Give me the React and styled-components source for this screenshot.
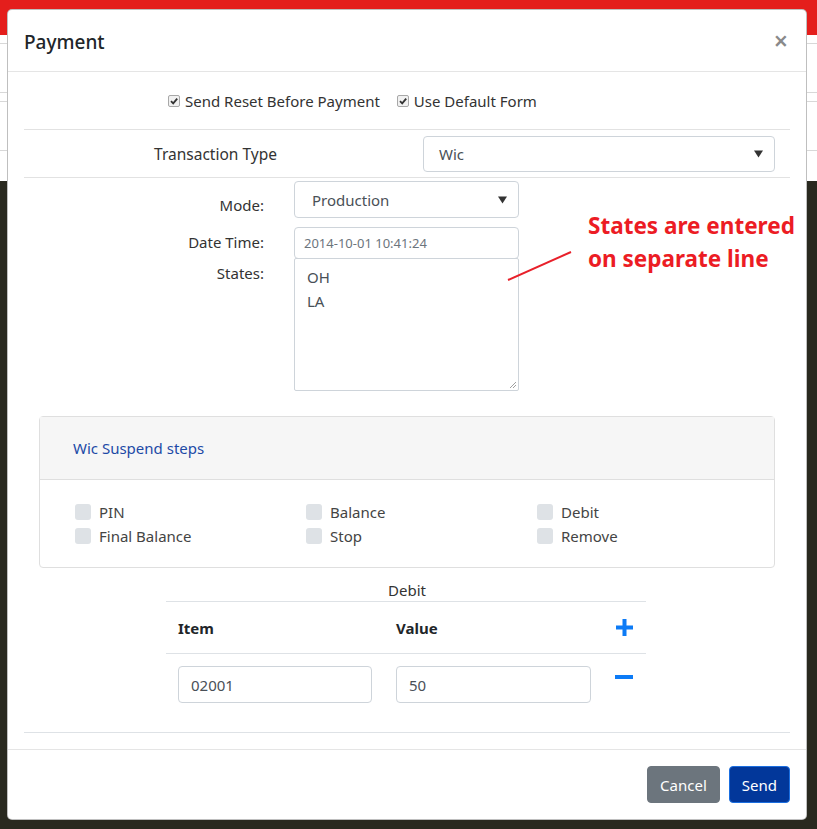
import React from "react";
import styled, { createGlobalStyle } from "styled-components";

const GlobalStyle = createGlobalStyle`
  html, body {
    margin: 0;
    padding: 0;
  }
  body {
    font-family: "Noto Sans", "Open Sans", sans-serif;
    background: #29291f;
  }
  * {
    box-sizing: border-box;
  }
`;

const stripRows = [9, 49, 9, 49, 30];
const steps = ["PIN", "Balance", "Debit", "Final Balance", "Stop", "Remove"];

function Caret() {
  return (
    <CaretIcon viewBox="0 0 10 8">
      <path d="M0 0 L10 0 L5 8 Z" fill="#333" />
    </CaretIcon>
  );
}

function TickBox({ label }) {
  return (
    <TickItem>
      <Tick>
        <svg width="10" height="10" viewBox="0 0 10 10">
          <path d="M2 5.2 L4.2 7.4 L8.2 2.6" stroke="#333" strokeWidth="1.8" fill="none" />
        </svg>
      </Tick>
      {label}
    </TickItem>
  );
}

export default function App() {
  return (
    <Page>
      <GlobalStyle />
      <RedBar />
      <Strip>
        {stripRows.map((h, i) => (
          <StripRow key={i} h={h} />
        ))}
      </Strip>

      <Modal>
        <Header>
          <Title>Payment</Title>
          <Close>×</Close>
        </Header>

        <Body>
          <CheckRow>
            <TickBox label="Send Reset Before Payment" />
            <TickBox label="Use Default Form" />
          </CheckRow>

          <TxRow>
            <TxLabel>Transaction Type</TxLabel>
            <TxCell>
              <Select h={36}>
                Wic
                <Caret />
              </Select>
            </TxCell>
          </TxRow>

          <FieldRow top={3}>
            <FieldLabel pad={14}>Mode:</FieldLabel>
            <Select h={37} w={225} pl={17}>
              Production
              <Caret />
            </Select>
          </FieldRow>
          <FieldRow top={9}>
            <FieldLabel pad={5}>Date Time:</FieldLabel>
            <Input small>2014-10-01 10:41:24</Input>
          </FieldRow>
          <FieldRow top={0}>
            <FieldLabel pad={4}>States:</FieldLabel>
            <TextArea>
              OH
              <br />
              LA
              <Grip viewBox="0 0 8 8">
                <path d="M1 7 L7 1 M4 7 L7 4" stroke="#888" strokeWidth="0.8" />
              </Grip>
            </TextArea>
          </FieldRow>

          <Panel>
            <PanelHead>Wic Suspend steps</PanelHead>
            <PanelBody>
              {steps.map((s) => (
                <StepItem key={s}>
                  <StepBox />
                  {s}
                </StepItem>
              ))}
            </PanelBody>
          </Panel>

          <Caption>Debit</Caption>
          <Table>
            <HeadRow>
              <HeadCell>Item</HeadCell>
              <HeadCell>Value</HeadCell>
              <IconCell>
                <svg width="19" height="19" viewBox="0 0 19 19">
                  <path d="M9.5 1 V18 M1 9.5 H18" stroke="#0d7bf6" strokeWidth="4" />
                </svg>
              </IconCell>
            </HeadRow>
            <BodyRow>
              <Cell>
                <Input h={37} w={194} pl={12}>
                  02001
                </Input>
              </Cell>
              <Cell>
                <Input h={37} w={195} pl={12}>
                  50
                </Input>
              </Cell>
              <IconCell top>
                <svg width="18" height="6" viewBox="0 0 18 6">
                  <path d="M0 3 H18" stroke="#0d7bf6" strokeWidth="4" />
                </svg>
              </IconCell>
            </BodyRow>
          </Table>
          <Rule />
        </Body>

        <Footer>
          <Button kind="cancel">Cancel</Button>
          <Button kind="send">Send</Button>
        </Footer>

        <Note>
          States are entered
          <br />
          on separate line
        </Note>
        <NoteLine viewBox="0 0 66 32">
          <path d="M1 30 L64 2" stroke="#e8202a" strokeWidth="2" />
        </NoteLine>
      </Modal>
    </Page>
  );
}

const Page = styled.div`
  position: relative;
  width: 817px;
  height: 829px;
  background: #29291f;
  overflow: hidden;
`;
const RedBar = styled.div`
  height: 35px;
  background: #e41e1c;
`;
const Strip = styled.div`
  background: #fff;
`;
const StripRow = styled.div`
  height: ${(p) => p.h}px;
  border-bottom: 1px solid #d8d8d8;
  &:last-child {
    border-bottom: none;
  }
`;
const Modal = styled.div`
  position: absolute;
  left: 7px;
  top: 9px;
  width: 800px;
  height: 811px;
  background: #fff;
  border: 1px solid rgba(0, 0, 0, 0.25);
  border-radius: 5px;
  display: flex;
  flex-direction: column;
`;
const Header = styled.div`
  height: 62px;
  padding: 0 18px 0 16px;
  display: flex;
  align-items: center;
  justify-content: space-between;
  border-bottom: 1px solid #e5e5e5;
`;
const Title = styled.h4`
  margin: 2px 0 0;
  font-size: 19px;
  font-weight: 500;
  color: #212529;
`;
const Close = styled.span`
  font-size: 25px;
  font-weight: 600;
  color: #8a8a8a;
  line-height: 1;
`;
const Body = styled.div`
  flex: 1;
  padding: 0 16px 16px;
  color: #212529;
  font-size: 15px;
`;
const CheckRow = styled.div`
  height: 58px;
  padding-left: 144px;
  display: flex;
  align-items: center;
  gap: 17px;
  border-bottom: 1px solid #e2e2e2;
`;
const TickItem = styled.label`
  display: flex;
  align-items: center;
  gap: 5px;
  font-size: 15px;
  color: #333;
`;
const Tick = styled.span`
  width: 12px;
  height: 12px;
  border: 1px solid #a8a8a8;
  border-radius: 2px;
  background: #f1f1f1;
  display: flex;
  align-items: center;
  justify-content: center;
`;
const TxRow = styled.div`
  height: 48px;
  display: grid;
  grid-template-columns: 1fr 1fr;
  align-items: center;
  border-bottom: 1px solid #e2e2e2;
`;
const TxLabel = styled.div`
  text-align: center;
  font-size: 15.5px;
  color: #333;
`;
const TxCell = styled.div`
  padding: 0 15px 0 16px;
`;
const Select = styled.div`
  height: ${(p) => p.h}px;
  width: ${(p) => (p.w ? `${p.w}px` : "100%")};
  padding: 0 11px 0 ${(p) => p.pl || 15}px;
  border: 1px solid #ced4da;
  border-radius: 4px;
  display: flex;
  align-items: center;
  justify-content: space-between;
  font-size: 15px;
  color: #495057;
`;
const CaretIcon = styled.svg`
  width: 9px;
  height: 8px;
`;
const FieldRow = styled.div`
  display: flex;
  gap: 30px;
  margin-top: ${(p) => p.top}px;
`;
const FieldLabel = styled.div`
  width: 240px;
  text-align: right;
  padding-top: ${(p) => p.pad}px;
  font-size: 15px;
  color: #333;
`;
const Input = styled.div`
  height: ${(p) => p.h || 32}px;
  width: ${(p) => p.w || 225}px;
  padding-left: ${(p) => p.pl || 9}px;
  border: 1px solid #ced4da;
  border-radius: 4px;
  display: flex;
  align-items: center;
  font-size: ${(p) => (p.small ? 13 : 15)}px;
  color: ${(p) => (p.small ? "#6c757d" : "#495057")};
`;
const TextArea = styled.div`
  position: relative;
  width: 225px;
  height: 133px;
  margin-top: -1px;
  padding: 6px 12px;
  border: 1px solid #ced4da;
  border-radius: 2px;
  font-size: 15px;
  line-height: 24px;
  color: #495057;
`;
const Grip = styled.svg`
  position: absolute;
  right: 1px;
  bottom: 1px;
  width: 8px;
  height: 8px;
`;
const Panel = styled.div`
  margin: 25px 15px 0;
  border: 1px solid #dfdfdf;
  border-radius: 4px;
`;
const PanelHead = styled.div`
  height: 63px;
  padding-left: 33px;
  display: flex;
  align-items: center;
  background: #f6f6f6;
  border-bottom: 1px solid #dfdfdf;
  color: #1d4aa6;
  font-size: 15px;
`;
const PanelBody = styled.div`
  padding: 20px 0 19px 35px;
  display: grid;
  grid-template-columns: repeat(3, 231px);
  grid-auto-rows: 24px;
`;
const StepItem = styled.div`
  display: flex;
  align-items: center;
  gap: 8px;
  font-size: 15px;
  color: #444;
`;
const StepBox = styled.span`
  width: 16px;
  height: 16px;
  border-radius: 3px;
  background: #dee2e6;
`;
const Caption = styled.div`
  margin-top: 11px;
  text-align: center;
  line-height: 22px;
  font-size: 15px;
  color: #333;
`;
const Table = styled.div`
  width: 480px;
  margin-left: 142px;
  border-top: 1px solid #dee2e6;
`;
const HeadRow = styled.div`
  height: 52px;
  display: grid;
  grid-template-columns: 218px 218px 44px;
  align-items: center;
  border-bottom: 1px solid #dee2e6;
`;
const HeadCell = styled.div`
  padding-left: 12px;
  font-weight: 700;
  font-size: 15px;
  color: #212529;
`;
const BodyRow = styled.div`
  display: grid;
  grid-template-columns: 218px 218px 44px;
  padding: 12px 0;
`;
const Cell = styled.div`
  padding-left: 12px;
`;
const IconCell = styled.div`
  display: flex;
  justify-content: center;
  align-self: ${(p) => (p.top ? "start" : "center")};
  padding-top: ${(p) => (p.top ? 8 : 0)}px;
`;
const Rule = styled.div`
  margin-top: 17px;
  border-top: 1px solid #dee2e6;
`;
const Footer = styled.div`
  height: 70px;
  padding: 0 16px;
  display: flex;
  align-items: center;
  justify-content: flex-end;
  gap: 9px;
  border-top: 1px solid #e5e5e5;
`;
const Button = styled.button`
  height: 37px;
  padding: 0 12px;
  border-radius: 4px;
  font-family: "Noto Sans", sans-serif;
  font-size: 15px;
  color: #fff;
  background: ${(p) => (p.kind === "send" ? "#02379a" : "#6c757d")};
  border: 1px solid ${(p) => (p.kind === "send" ? "#1a6ee0" : "#6c757d")};
`;
const Note = styled.div`
  position: absolute;
  left: 580px;
  top: 199px;
  font-size: 22.5px;
  line-height: 33px;
  font-weight: 700;
  color: #ec1c24;
`;
const NoteLine = styled.svg`
  position: absolute;
  left: 499px;
  top: 240px;
  width: 66px;
  height: 32px;
`;
